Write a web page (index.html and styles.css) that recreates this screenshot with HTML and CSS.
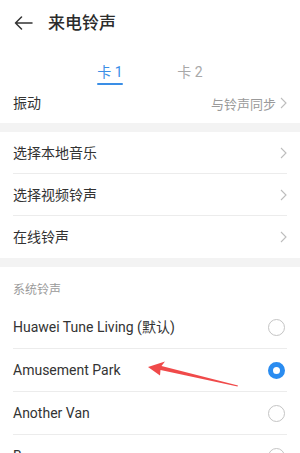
FILE: index.html
```html
<!DOCTYPE html>
<html lang="zh-CN">
<head>
<meta charset="utf-8">
<title>来电铃声</title>
<link rel="stylesheet" href="styles.css">
</head>
<body>
<div class="page">
  <header class="header">
    <svg class="back" width="19" height="14" viewBox="0 0 19 14"><path d="M18 7H1.5M7.5 1L1.5 7l6 6" fill="none" stroke="#333" stroke-width="1.5" stroke-linecap="round" stroke-linejoin="round"/></svg>
    <h1 class="title">来电铃声</h1>
  </header>

  <nav class="tabs">
    <div class="tab active"><span class="tab-label">卡 1</span><span class="tab-line"></span></div>
    <div class="tab"><span class="tab-label">卡 2</span><span class="tab-line"></span></div>
  </nav>

  <div class="vibrate">
    <span class="row-text">振动</span>
    <span class="vibrate-value">与铃声同步<svg class="chev" width="7" height="12" viewBox="0 0 7 12"><path d="M1 1l5 5-5 5" fill="none" stroke="#bdbdbd" stroke-width="1.1"/></svg></span>
  </div>

  <div class="gap"></div>

  <div class="group">
    <div class="row"><span class="row-text">选择本地音乐</span><svg class="chev" width="7" height="12" viewBox="0 0 7 12"><path d="M1 1l5 5-5 5" fill="none" stroke="#bdbdbd" stroke-width="1.1"/></svg></div>
    <div class="row"><span class="row-text">选择视频铃声</span><svg class="chev" width="7" height="12" viewBox="0 0 7 12"><path d="M1 1l5 5-5 5" fill="none" stroke="#bdbdbd" stroke-width="1.1"/></svg></div>
    <div class="row last"><span class="row-text">在线铃声</span><svg class="chev" width="7" height="12" viewBox="0 0 7 12"><path d="M1 1l5 5-5 5" fill="none" stroke="#bdbdbd" stroke-width="1.1"/></svg></div>
  </div>

  <div class="gap"></div>

  <div class="section-label">系统铃声</div>
  <div class="list">
    <div class="item"><span class="row-text">Huawei Tune Living (默认)</span><span class="radio"></span></div>
    <div class="item"><span class="row-text">Amusement Park</span><span class="radio checked"></span></div>
    <div class="item"><span class="row-text">Another Van</span><span class="radio"></span></div>
    <div class="item"><span class="row-text">Bouncy</span><span class="radio"></span></div>
  </div>

  <svg class="pointer" width="300" height="453" viewBox="0 0 300 453"><polygon points="148,367 165,361.5 161.5,366 238,385.6 237.5,386.4 160.5,370 160,375.5" fill="#f04a4a"/></svg>
</div>
</body>
</html>
```

FILE: styles.css
```css
html, body {
  margin: 0;
  padding: 0;
  background: #ffffff;
}
body {
  font-family: Roboto, "Noto Sans CJK SC", sans-serif;
  color: #333333;
  width: 300px;
  height: 453px;
  overflow: hidden;
}
.page {
  position: relative;
  width: 300px;
  height: 453px;
  overflow: hidden;
}
.header {
  display: flex;
  align-items: center;
  height: 46px;
  padding-left: 14px;
  gap: 15px;
}
.back {
  display: block;
}
.title {
  margin: 0;
  font-size: 17px;
  font-weight: 500;
  color: #2b2b2b;
  line-height: 20px;
}
.tabs {
  display: flex;
  justify-content: center;
  height: 40px;
}
.tab {
  width: 80px;
  display: flex;
  flex-direction: column;
  align-items: center;
  padding-top: 16px;
}
.tab-label {
  font-size: 14px;
  line-height: 20px;
  color: #a8a8a8;
}
.tab-line {
  width: 26px;
  height: 2px;
  margin-top: 1px;
  border-radius: 1px;
  background: transparent;
}
.tab.active .tab-label {
  color: #3a8ee6;
}
.tab.active .tab-line {
  background: #3a8ee6;
}
.vibrate {
  display: flex;
  align-items: center;
  justify-content: space-between;
  height: 34px;
  padding: 0 13px 3px 13px;
}
.row-text {
  font-size: 14px;
  line-height: 18px;
  color: #333333;
}
.vibrate-value {
  display: flex;
  align-items: center;
  gap: 4px;
  font-size: 13px;
  color: #9a9a9a;
}
.chev {
  display: block;
}
.gap {
  height: 9px;
  background: #f3f3f3;
}
.group {
  padding: 0 13px;
}
.row {
  display: flex;
  align-items: center;
  justify-content: space-between;
  height: 42px;
  box-sizing: border-box;
  border-bottom: 1px solid #ececec;
}
.row.last {
  border-bottom: none;
}
.section-label {
  height: 39px;
  box-sizing: border-box;
  padding: 15px 13px 0;
  font-size: 12px;
  line-height: 16px;
  color: #9a9a9a;
}
.list {
  padding: 0 13px;
}
.item {
  display: flex;
  align-items: center;
  justify-content: space-between;
  height: 43px;
  box-sizing: border-box;
  border-bottom: 1px solid #ececec;
}
.radio {
  width: 17px;
  height: 17px;
  box-sizing: border-box;
  border: 1.3px solid #c4c4c4;
  border-radius: 50%;
  margin-right: 2px;
}
.radio.checked {
  border: 5px solid #2a8cf0;
}
.pointer {
  position: absolute;
  left: 0;
  top: 0;
  pointer-events: none;
}
```
